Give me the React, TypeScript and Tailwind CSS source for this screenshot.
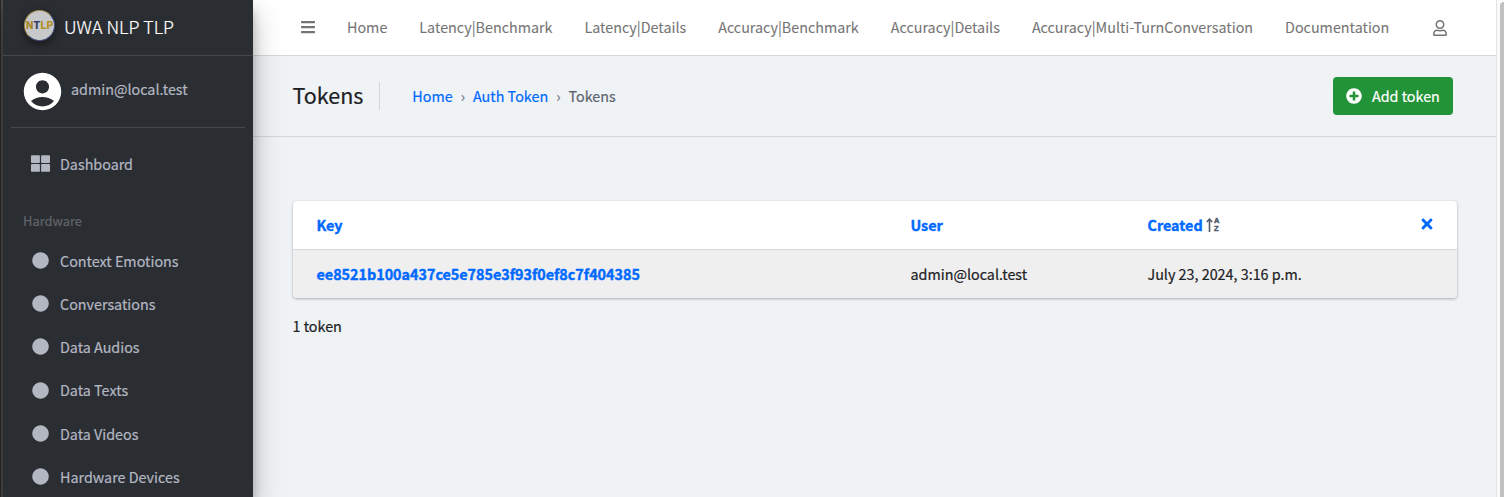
import React from "react";
import { FaBars, FaCircle, FaPlusCircle, FaRegUser, FaThLarge, FaTimes } from "react-icons/fa";
import { MdAccountCircle } from "react-icons/md";

const navLinks = [
  "Home",
  "Latency|Benchmark",
  "Latency|Details",
  "Accuracy|Benchmark",
  "Accuracy|Details",
  "Accuracy|Multi-TurnConversation",
  "Documentation",
];

const models = [
  "Context Emotions",
  "Conversations",
  "Data Audios",
  "Data Texts",
  "Data Videos",
  "Hardware Devices",
];

function Logo() {
  return (
    <div className="flex size-[31px] items-center justify-center rounded-full border border-[#a08a4c] border-r-[#46527c] border-b-[#46527c] bg-[#c6c8ca] text-[10.5px] leading-none font-bold shadow-[0_3px_8px_rgba(0,0,0,0.5)]">
      <span className="text-[#a8821e]">N</span>
      <span className="text-[#303c62]">T</span>
      <span className="text-[#b58c20]">LP</span>
    </div>
  );
}

function Sidebar() {
  return (
    <aside className="relative z-10 flex w-[250px] shrink-0 flex-col bg-[#2a2d32] text-[#b3b7c2] shadow-[0_14px_28px_rgba(0,0,0,0.25),0_10px_10px_rgba(0,0,0,0.22)]">
      <div className="flex h-14 shrink-0 items-center border-b border-[#44484d] pl-[21px]">
        <div className="pb-[5px]">
          <Logo />
        </div>
        <span className="mb-1 ml-[9px] text-[17.9px] leading-[30px] font-light text-white">UWA NLP TLP</span>
      </div>
      <div className="mx-2 flex h-[72px] shrink-0 items-center border-b border-[#44484d] pl-[9px]">
        <MdAccountCircle className="mb-px size-[45px] text-white" />
        <span className="mb-[5px] ml-[6px]">admin@local.test</span>
      </div>
      <div className="mt-[15px] flex h-[43px] shrink-0 items-center pl-[28px]">
        <FaThLarge className="mb-[2px] size-[19px]" />
        <span className="mb-[2px] ml-[10px]">Dashboard</span>
      </div>
      <div className="mt-[20px] mb-px flex h-[29px] shrink-0 items-center pl-5 text-[12.9px] text-[#62656a]">Hardware</div>
      <ul className="mt-[4px]">
        {models.map((name) => (
          <li key={name} className="flex h-[43.2px] items-center pl-[29px]">
            <FaCircle className="mb-[2px] size-[17px]" />
            <span className="mb-[1.5px] ml-[11px]">{name}</span>
          </li>
        ))}
      </ul>
    </aside>
  );
}

function SortIcon() {
  return (
    <span className="ml-[3px] flex items-center text-[#4f5b6b]">
      <svg viewBox="0 0 7 14" className="h-[14px] w-[7px]" fill="none" stroke="currentColor">
        <path d="M3.5 14V2" strokeWidth="1.6" />
        <path d="M.8 4 3.5 1.2 6.2 4" strokeWidth="1.7" />
      </svg>
      <span className="flex flex-col pl-[1.5px] font-['Liberation_Sans',sans-serif] text-[7.5px] leading-[8.5px] font-bold [-webkit-text-stroke:0.5px]">
        <span>A</span>
        <span>Z</span>
      </span>
    </span>
  );
}

export default function App() {
  return (
    <div className="flex h-[497px] w-full overflow-hidden bg-[#eff3f6] font-['Noto_Sans_CJK_SC',sans-serif] text-[14.34px] leading-6 text-[#1d2124] [-webkit-text-stroke:0.2px]">
      <div className="w-[3px] shrink-0 border-r-2 border-[#4e4b4b] bg-[#29292b]" />
      <Sidebar />
      <div className="flex min-w-0 flex-1 flex-col">
        <nav className="flex h-14 shrink-0 items-center border-b border-[#d3d7db] bg-white text-[#757575] [-webkit-text-stroke:0.08px]">
          <FaBars className="mb-[2px] ml-[47px] size-4" />
          <div className="mb-[2px] ml-[31px] flex gap-8">
            {navLinks.map((label) => (
              <a key={label} className="whitespace-nowrap">
                {label}
              </a>
            ))}
          </div>
          <FaRegUser className="mr-[48px] ml-auto size-4" />
        </nav>
        <header className="flex h-[81px] shrink-0 items-center border-b border-[#d3d7db] pr-[43px] pl-[39.5px]">
          <h1 className="flex h-7 items-center border-r border-[#d3d7db] pr-4 pb-[2px] text-[21.5px]">Tokens</h1>
          <div className="ml-8 flex">
            <a className="text-[#0069ff]">Home</a>
            <span className="mx-2 text-[#6c757d]">›</span>
            <a className="text-[#0069ff]">Auth Token</a>
            <span className="mx-2 text-[#6c757d]">›</span>
            <span className="text-[#5c656e]">Tokens</span>
          </div>
          <button className="ml-auto flex h-[38px] w-[120px] items-center rounded-[4px] bg-[#229336] pl-[13px] text-white">
            <FaPlusCircle className="size-4" />
            <span className="ml-[10px]">Add token</span>
          </button>
        </header>
        <main className="pr-[39px] pl-[39.5px]">
          <section className="mt-[64px] overflow-hidden rounded-[4px] bg-white shadow-[0_0_1px_rgba(0,0,0,0.13),0_1px_3px_rgba(0,0,0,0.28)]">
            <div className="flex h-[49px] items-center border-b border-[#d3d7db] pl-[24px] font-bold text-[#0069ff] [-webkit-text-stroke:0.4px]">
              <span className="w-[594px]">Key</span>
              <span className="w-[237px]">User</span>
              <span className="flex">
                Created
                <SortIcon />
              </span>
              <FaTimes className="mr-[22px] mb-[2px] ml-auto size-4" />
            </div>
            <div className="flex h-[48px] items-center bg-[#efefef] pl-[24px]">
              <span className="w-[594px] font-bold text-[#0069ff] [-webkit-text-stroke:0.4px]">ee8521b100a437ce5e785e3f93f0ef8c7f404385</span>
              <span className="w-[237px]">admin@local.test</span>
              <span>July 23, 2024, 3:16 p.m.</span>
            </div>
          </section>
          <p className="mt-4">1 token</p>
        </main>
      </div>
      <div className="flex w-2 shrink-0 border-l border-[#e4e4e4] bg-[#fafafa] pt-[2px] pl-[3px]">
        <div className="w-1 rounded-tl-[4px] bg-[#c1c1c1]" />
      </div>
    </div>
  );
}
